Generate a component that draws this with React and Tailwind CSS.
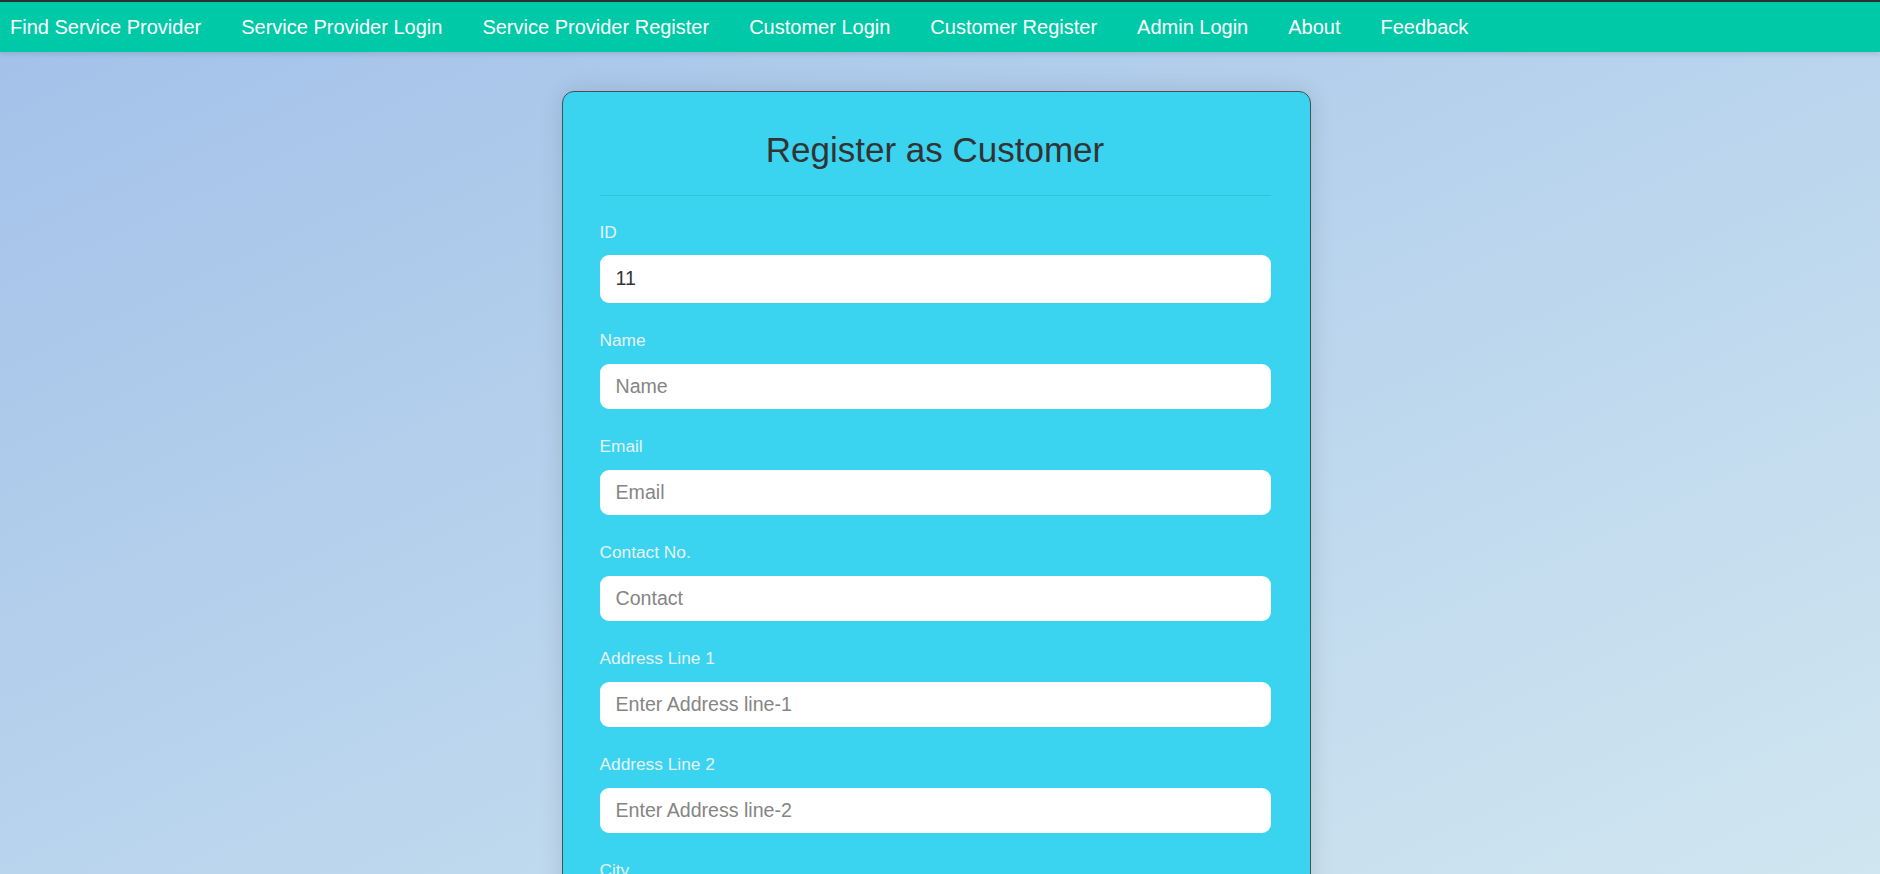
import { useState } from 'react';

const navLinks = [
  'Find Service Provider',
  'Service Provider Login',
  'Service Provider Register',
  'Customer Login',
  'Customer Register',
  'Admin Login',
  'About',
  'Feedback',
];

const fields = [
  { key: 'name', label: 'Name', placeholder: 'Name' },
  { key: 'email', label: 'Email', placeholder: 'Email' },
  { key: 'contact', label: 'Contact No.', placeholder: 'Contact' },
  { key: 'address1', label: 'Address Line 1', placeholder: 'Enter Address line-1' },
  { key: 'address2', label: 'Address Line 2', placeholder: 'Enter Address line-2' },
  { key: 'city', label: 'City', placeholder: 'City' },
  { key: 'state', label: 'State', placeholder: 'State' },
  { key: 'pincode', label: 'Pincode', placeholder: 'Pincode' },
  { key: 'password', label: 'Password', placeholder: 'Password', type: 'password' },
];

export default function App() {
  const [form, setForm] = useState({});

  const update = (key) => (e) => setForm({ ...form, [key]: e.target.value });

  return (
    <div className="h-screen overflow-hidden bg-gradient-to-br from-[#a2c1e9] to-[#d0e6f0] font-['Liberation_Sans',Arial,sans-serif]">
      <nav className="relative z-10 flex h-[52px] items-center gap-[40px] border-t-2 border-[#2b2f2e] bg-[#00c9a7] pl-[10px] pt-px shadow-[0_2px_5px_rgba(0,0,0,0.12)]">
        {navLinks.map((link) => (
          <a key={link} href="#" className="whitespace-nowrap text-[20px] leading-[23px] text-white">
            {link}
          </a>
        ))}
      </nav>

      <div className="flex justify-center pr-[8px] pt-[39px]">
        <form
          onSubmit={(e) => e.preventDefault()}
          className="w-[749px] rounded-[12px] border border-[#4a4f55] bg-[#3ad4f0] pl-[37px] pr-[39px] pt-[38px] pb-[40px] shadow-[0_0_24px_rgba(0,0,0,0.12)]"
        >
          <h1 className="text-center text-[35px] leading-[40px] text-[#333]">Register as Customer</h1>
          <div className="mt-[25px] h-px bg-[#2fc2dd]" />

          <div className="mt-[26px]">
            <label className="block text-[17.3px] leading-[20px] text-[#e6f2f5]">ID</label>
            <input
              value="11"
              readOnly
              className="mt-[12.5px] block h-[48px] w-full rounded-[9px] bg-white pl-[16px] text-[19.6px] text-[#333] outline-none"
            />
          </div>

          {fields.map((f) => (
            <div key={f.key} className="mt-[27px]">
              <label className="block text-[17.3px] leading-[20px] text-[#e6f2f5]">{f.label}</label>
              <input
                type={f.type || 'text'}
                value={form[f.key] || ''}
                onChange={update(f.key)}
                placeholder={f.placeholder}
                className="mt-[14px] block h-[45px] w-full rounded-[9px] bg-white pl-[16px] text-[19.6px] text-[#333] outline-none placeholder:text-[#858585]"
              />
            </div>
          ))}

          <button
            type="submit"
            className="mt-[30px] h-[46px] w-full rounded-[9px] bg-[#00c9a7] text-[19.6px] text-white"
          >
            Register
          </button>
        </form>
      </div>
    </div>
  );
}
